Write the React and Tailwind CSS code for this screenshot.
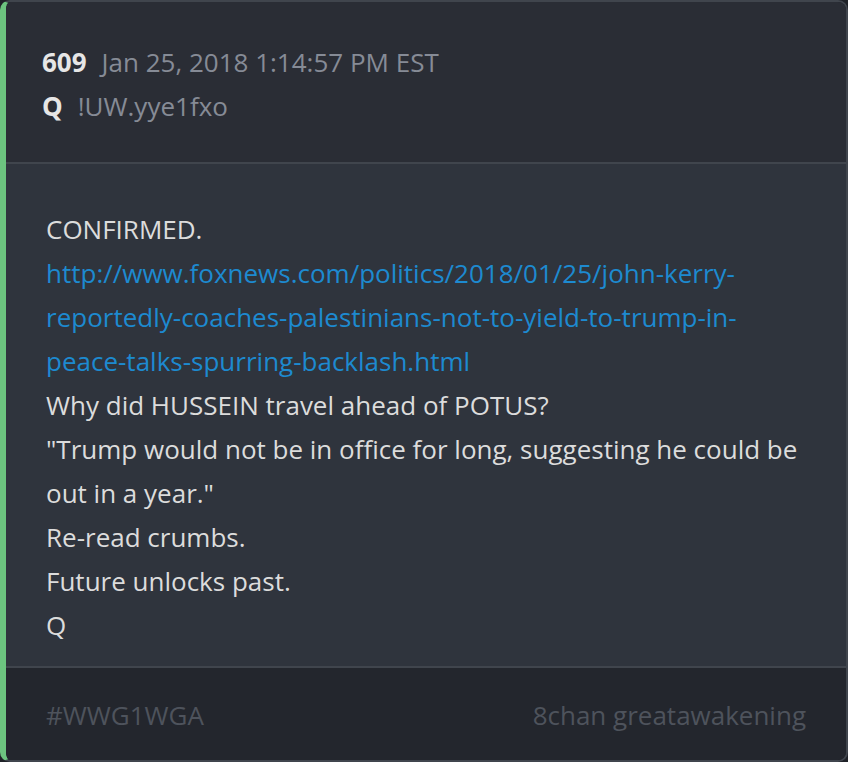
export default function App() {
    const lines = [
        { t: 'CONFIRMED.' },
        { t: 'http://www.foxnews.com/politics/2018/01/25/john-kerry-reportedly-coaches-palestinians-not-to-yield-to-trump-in-peace-talks-spurring-backlash.html', link: true },
        { t: 'Why did HUSSEIN travel ahead of POTUS?' },
        { t: '"Trump would not be in office for long, suggesting he could be out in a year."' },
        { t: 'Re-read crumbs.' },
        { t: 'Future unlocks past.' },
        { t: 'Q' },
    ];

    return (
        <div className="w-[848px] h-[762px] bg-[#1f2228]" style={{ fontFamily: '"Open Sans", "Noto Sans", sans-serif' }}>
            <div className="h-full flex flex-col rounded-[10px] overflow-hidden border-l-[6px] border-l-[#6cc47f] border-t-2 border-t-[#40454d] border-r-2 border-r-[#40454d] border-b-2 border-b-[#40454d]">
                {/* header */}
                <div className="bg-[#2a2d35] h-[160px] pl-[36px] pt-[38px] text-[26px] leading-[44px]">
                    <div className="flex items-baseline">
                        <span className="font-bold text-[#e6e6e6]">609</span>
                        <span className="ml-[15px] text-[#868b96]">Jan 25, 2018 1:14:57 PM EST</span>
                    </div>
                    <div className="flex items-baseline">
                        <span className="font-bold text-[#e6e6e6]">Q</span>
                        <span className="ml-[15px] text-[#868b96]">!UW.yye1fxo</span>
                    </div>
                </div>
                <div className="h-[2px] bg-[#40454d]" />

                {/* body */}
                <div className="bg-[#2f343d] h-[502px] pl-[40px] pr-[30px] pt-[43px] text-[26px] leading-[44px] text-[#dcdcdc]">
                    {lines.map((l, i) =>
                        l.link ? (
                            <div key={i} className="text-[#1d8ad0] break-words">{l.t}</div>
                        ) : (
                            <div key={i}>{l.t}</div>
                        )
                    )}
                </div>
                <div className="h-[2px] bg-[#40454d]" />

                {/* footer */}
                <div className="flex-1 bg-[#23262d] flex items-center justify-between pl-[40px] pr-[40px] pt-[2px] text-[26px] text-[#4e535c]">
                    <span>#WWG1WGA</span>
                    <span>8chan greatawakening</span>
                </div>
            </div>
        </div>
    );
}
